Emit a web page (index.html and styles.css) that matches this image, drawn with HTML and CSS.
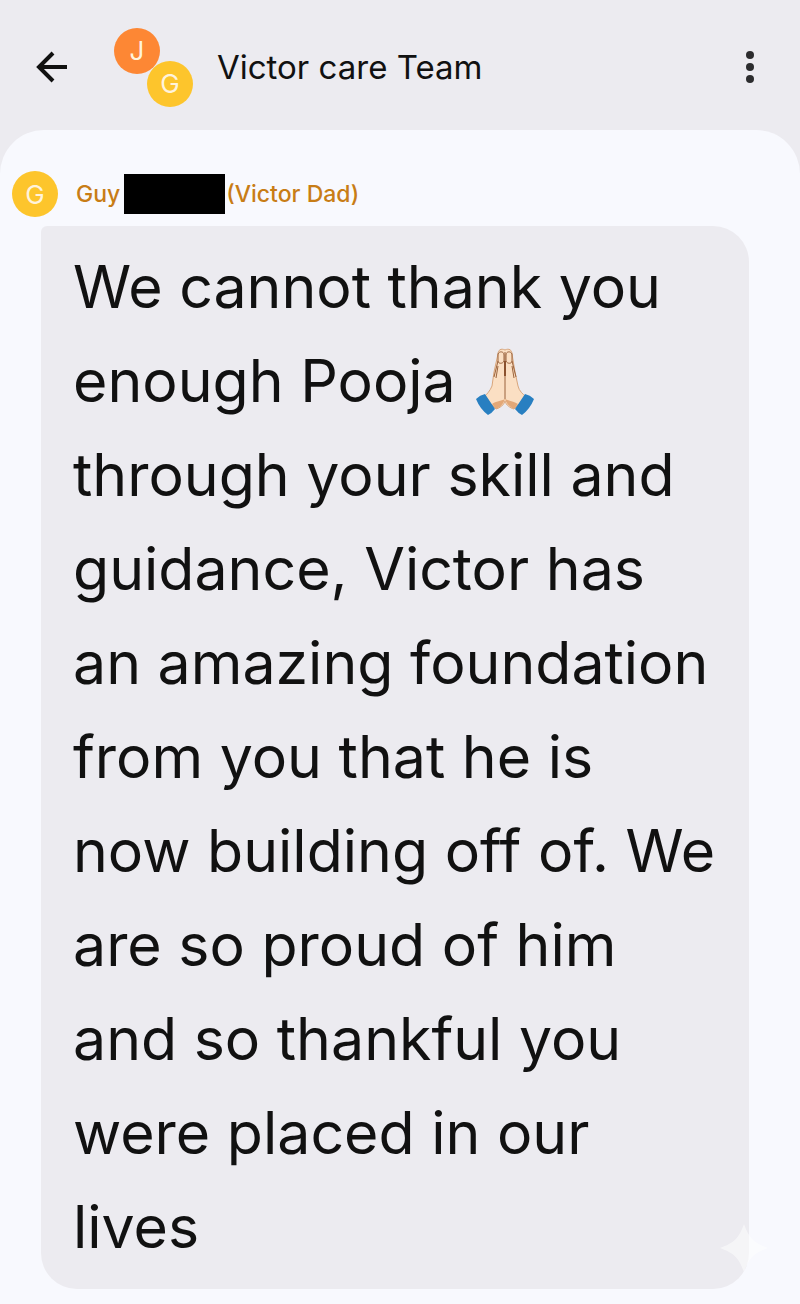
FILE: index.html
```html
<!DOCTYPE html>
<html lang="en">
<head>
    <meta charset="UTF-8">
    <meta name="viewport" content="width=device-width, initial-scale=1.0">
    <title>Victor care Team</title>
    <link rel="stylesheet" href="styles.css">
</head>
<body>
    <header class="top-bar">
        <button class="icon-button back" aria-label="Back">
            <svg width="34" height="34" viewBox="0 0 34 34" fill="none" stroke="#111" stroke-width="4">
                <path d="M32 17H4M18 3L4 17L18 31"/>
            </svg>
        </button>
        <div class="group-avatar">
            <span class="avatar orange">J</span>
            <span class="avatar yellow second">G</span>
        </div>
        <h1 class="title">Victor care Team</h1>
        <button class="icon-button more" aria-label="More options">
            <svg width="8" height="32" viewBox="0 0 8 32" fill="#2c2c2e">
                <circle cx="4" cy="4" r="4"/>
                <circle cx="4" cy="16" r="4"/>
                <circle cx="4" cy="28" r="4"/>
            </svg>
        </button>
    </header>
    <main class="chat">
        <div class="sender">
            <span class="avatar yellow">G</span>
            <span class="name">Guy</span>
            <span class="redacted"></span>
            <span class="name">(Victor Dad)</span>
        </div>
        <div class="bubble">
            <p class="message">We cannot thank you<br>
                enough Pooja
                <svg class="emoji" role="img" aria-label="folded hands" width="60" height="68" viewBox="0 0 60 68">
                    <path fill="#fbdfc3" stroke="#d9a67c" stroke-width="1" d="M29 2C25 0 22 2 22 6L18 24L16 38C14 43 11 46 8 49L20 61C24 60 28 57 29 53C30 57 34 60 38 61L50 49C47 46 43 43 42 38L39 24L36 6C36 2 33 0 29 2Z"/>
                    <path fill="#e3a878" d="M16 56C20 53 25 53 29 51C27 57 23 60 20 61ZM42 56C38 53 33 53 29 51C31 57 35 60 38 61Z"/>
                    <path fill="none" stroke="#9a623c" stroke-width="1" d="M29 4V51M22 6C23 3 28 3 28 7V13C27 16 22 16 22 13ZM36 6C35 3 30 3 30 7V13C31 16 36 16 36 13ZM22 13L18 29M36 13L40 29M22 18L20 30M36 18L38 30"/>
                    <path stroke="#8b512e" stroke-width="2" d="M29 13V28"/>
                    <path fill="#287fc1" d="M9 46L19 61Q16 65 12 67Q4 61 0 51Q4 47 9 46ZM49 46L39 61Q42 65 46 67Q54 61 58 51Q54 47 49 46Z"/>
                </svg><br>
                through your skill and<br>
                guidance, Victor has<br>
                an amazing foundation<br>
                from you that he is<br>
                now building off of. We<br>
                are so proud of him<br>
                and so thankful you<br>
                were placed in our<br>
                lives</p>
            <svg class="sparkle" width="48" height="48" viewBox="0 0 48 48" fill="#fff" aria-hidden="true">
                <path d="M24 0C29 14 34 19 48 24C34 29 29 34 24 48C19 34 14 29 0 24C14 19 19 14 24 0Z"/>
            </svg>
        </div>
    </main>
</body>
</html>
```
FILE: styles.css
```css
* {
    box-sizing: border-box;
}

body {
    margin: 0;
    background-color: #ecebf0;
    color: #111;
    font-family: Inter, Roboto, sans-serif;
}

.top-bar {
    display: flex;
    align-items: center;
    height: 130px;
    padding: 4px 46px 0 35px;
}

.icon-button {
    display: flex;
    padding: 0;
    border: none;
    background: none;
    cursor: pointer;
}

.group-avatar {
    display: grid;
    width: 79px;
    height: 79px;
    margin-left: 45px;
}

.avatar {
    display: flex;
    justify-content: center;
    align-items: center;
    grid-area: 1 / 1;
    width: 46px;
    height: 46px;
    border-radius: 50%;
    color: #fff3dc;
    font-size: 26px;
}

.orange {
    background-color: #fd8734;
}

.yellow {
    background-color: #fdc52c;
}

.second {
    align-self: end;
    justify-self: end;
}

.title {
    flex: 1;
    margin: 0 0 0 24px;
    font-size: 33px;
    font-weight: 400;
}

.chat {
    padding: 41px 51px 15px 41px;
    border-radius: 44px 44px 0 0;
    background-color: #f8f9fe;
}

.sender {
    display: flex;
    align-items: center;
    height: 46px;
    margin: 0 0 9px -29px;
}

.name {
    color: #c87d16;
    font-size: 23px;
    font-weight: 500;
}

.avatar + .name {
    margin-left: 18px;
}

.redacted {
    width: 101px;
    height: 40px;
    margin: 0 1px 0 4px;
    background-color: #000;
}

.bubble {
    position: relative;
    padding: 14px 32px 15px;
    border-radius: 6px 36px 36px 36px;
    background-color: #ecebf0;
}

.message {
    margin: 0;
    font-size: 59px;
    font-weight: 400;
    line-height: 94px;
    white-space: nowrap;
}

.emoji {
    margin-left: 4px;
    vertical-align: -14px;
}

.sparkle {
    position: absolute;
    right: -19px;
    bottom: 17px;
    opacity: 0.5;
}
```
